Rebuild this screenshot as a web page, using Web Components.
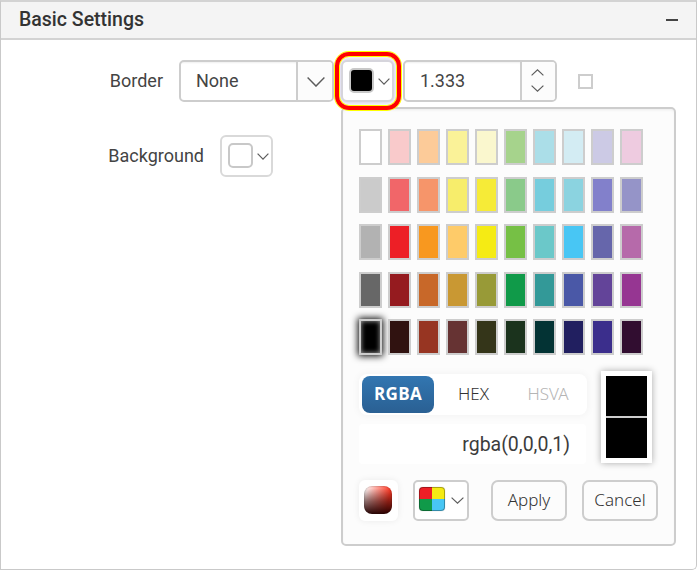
<!DOCTYPE html>
<html lang="en"><head><meta charset="utf-8"><title>Basic Settings</title>
<style>body{margin:0;background:#fff;font-family:Roboto,"Liberation Sans",sans-serif;font-size:18px;color:#444}</style></head>
<body><settings-panel></settings-panel>
<script>
const define=(name,html,setup)=>customElements.define(name,class extends HTMLElement{
  connectedCallback(){
    if(this.shadowRoot)return;
    const r=this.attachShadow({mode:'open'});
    r.innerHTML='<style>*{box-sizing:border-box}:host{box-sizing:border-box}</style>'+html;
    if(setup)setup(this,r);
  }
});

define('chevron-icon',`<style>:host{display:block;flex:none;line-height:0}</style>
<svg fill="none" stroke="#5c5c5c"><path/></svg>`,(h,r)=>{
  const w=+h.getAttribute('w'),t=+h.getAttribute('h'),s=r.querySelector('svg');
  s.setAttribute('width',w);s.setAttribute('height',t);
  s.setAttribute('stroke-width',h.getAttribute('stroke')||1.2);
  const up=h.hasAttribute('up');
  r.querySelector('path').setAttribute('d',up?`M.6 ${t-.6}L${w/2} .9L${w-.6} ${t-.6}`:`M.6 .6L${w/2} ${t-.9}L${w-.6} .6`);
});

define('combo-box',`<style>
:host{display:flex;width:155px;height:42px;border:2px solid #cdcdcd;border-radius:5px;background:#fff;overflow:hidden}
.v{width:115px;padding-left:15px;line-height:38px;box-shadow:inset 0 2px 2px -1px #0001}
.b{flex:1;border-left:2px solid #cdcdcd;background:#fcfcfc;display:flex;align-items:center;justify-content:center;padding:2px 0 0 1px}
</style><div class="v"><slot></slot></div><div class="b"><chevron-icon w="18" h="10" stroke="1.4"></chevron-icon></div>`);

define('number-spinner',`<style>
:host{display:flex;width:154px;height:42px;border:2px solid #cdcdcd;border-radius:5px;background:#fff;overflow:hidden}
.v{width:115px;padding-left:15px;line-height:38px;box-shadow:inset 0 2px 2px -1px #0001}
.b{flex:1;border-left:2px solid #cdcdcd;background:#fcfcfc;display:flex;flex-direction:column;align-items:center;padding:7px 2px 0 0;gap:9px}
</style><div class="v"><slot></slot></div><div class="b"><chevron-icon w="13" h="7" up></chevron-icon><chevron-icon w="13" h="7"></chevron-icon></div>`);

define('color-button',`<style>
:host{display:block;width:53px;height:42px;position:relative}
.btn{display:flex;align-items:flex-start;height:42px;gap:4px;padding:6px 0 0 6px;border:2px solid #d9d9d9;border-radius:6px;background:#fff}
i{flex:none;width:25px;height:25px;border:2px solid #c8c8c8;border-radius:5px;background:var(--c)}
chevron-icon{margin-top:10px}
:host([open]) .btn{box-shadow:0 0 5px 1px #cfcbe8;border-color:#d6d5dc}
.ring{display:none}
:host([open]) .ring{display:block;position:absolute;z-index:3;left:-6px;top:-8px;width:66px;height:58px;border:4px solid red;border-radius:14px;box-shadow:0 0 0 1px #ff0,inset 0 0 0 1px #ff0}
</style><div class="btn"><i></i><chevron-icon w="12" h="7"></chevron-icon></div><div class="ring"></div>`,(h)=>h.style.setProperty('--c',h.getAttribute('color')));

define('swatch-grid',`<style>
:host{display:grid;grid-template-columns:repeat(10,23px);grid-auto-rows:36px;gap:11.6px 6px}
i{border:2px solid #cdcdcd}
.sel{box-shadow:0 0 7px 1px #000,inset 0 0 5px #aaa}
</style>`,(h,r)=>{
  const colors=`fff f9cacb fccb99 faf298 faf7ce a6d38c abdee8 d3ecf3 cccae5 eecbe0
  cbcbcb f16669 f6956a f7ed6b f6eb37 8aca8a 76cddd 8bd3e0 8280cb 9594c8
  b2b2b2 ed1f26 f8981f fecb69 f5eb14 76c045 6bc8c9 48c6f4 6666ab b66aaa
  676767 951b1f c86829 c99833 989a37 109a49 339998 4a58a7 634499 963692
  000 301210 973522 663333 343519 1b331d 033334 211f60 3b2e8c 310d30`.split(/\s+/);
  for(const c of colors){const i=document.createElement('i');i.style.background='#'+c;if(c==='000')i.className='sel';r.append(i)}
});

define('mode-tabs',`<style>
:host{display:flex;width:228px;height:41px;padding:2px 3px;background:#fff;border-radius:8px;box-shadow:0 0 8px #0000000d;font:350 17px/36px "Noto Sans","Open Sans",sans-serif;text-align:center;color:#333}
span{height:37px}.a{width:72px;border-radius:8px;color:#fff;font:700 17px/36px "Open Sans",sans-serif;letter-spacing:.3px;background:linear-gradient(#3276b1,#2a6093)}
.b{width:79px}.c{width:70px;color:#b5b5b5}
</style><span class="a">RGBA</span><span class="b">HEX</span><span class="c">HSVA</span>`);

define('color-preview',`<style>
:host{display:block;width:51px;height:92px;padding:5px;background:#fff;box-shadow:0 0 7px #0005}
i{display:block;height:40px;background:#000}i+i{height:42px;border-top:2px solid #cdcdcd}
</style><i></i><i></i>`);

define('push-button',`<style>
:host{display:block;width:76px;height:41px;border:2px solid #cdcdcd;border-radius:7px;background:#fcfcfc;font:350 17px/36px "Noto Sans","Open Sans",sans-serif;text-align:center;color:#333;white-space:nowrap}
</style><slot></slot>`);

define('spectrum-button',`<style>
:host{display:block;width:39px;height:41px;padding:6px 5px;background:#fff;border-radius:6px;box-shadow:0 0 7px #00000012}
i{display:block;width:28px;height:28px;border-radius:8px;background:linear-gradient(#0000 8%,#2008 55%,#200e 97%),linear-gradient(100deg,#fff 3%,#ff3c28 82%);box-shadow:inset 0 0 2px #0006}
</style><i></i>`);

define('palette-button',`<style>
:host{display:flex;width:56px;height:41px;border:2px solid #cdcdcd;border-radius:5px;background:#fff;padding:5px 0 0 4px}
i{display:block;width:26px;height:24px;border-radius:4px;border:1px solid #0000004d;background:conic-gradient(#f5eb14 25%,#48c6f4 0 50%,#109a49 0 75%,#ed1f26 0) border-box;box-shadow:0 0 1px #0005}
chevron-icon{margin:10px 0 0 6px}
</style><i></i><chevron-icon w="13" h="7"></chevron-icon>`);

define('color-popup',`<style>
:host{display:block;width:335px;height:439px;border:2px solid #cdcdcd;border-radius:5px;background:#fcfcfc;padding:20px 16px;box-shadow:inset 0 2px 3px -1px #0001}
.mid{display:flex;gap:14px;margin-top:16px}.left{padding-top:3px}
.field{width:227px;height:40px;margin-top:9px;border-radius:4px;background:#fff;text-align:right;padding-right:16px;font-size:19.5px;line-height:41px;color:#3c3c3c}
.foot{display:flex;margin-top:16px;gap:15px}
push-button:first-of-type{margin-left:7px}
</style><swatch-grid></swatch-grid>
<div class="mid"><div class="left"><mode-tabs></mode-tabs><div class="field">rgba(0,0,0,1)</div></div><color-preview></color-preview></div>
<div class="foot"><spectrum-button></spectrum-button><palette-button></palette-button><push-button>Apply</push-button><push-button>Cancel</push-button></div>`);

define('panel-header',`<style>
:host{display:flex;align-items:center;justify-content:space-between;height:38px;padding:0 18px 2px 18px;background:#f4f4f4;border-bottom:2px solid #d3d3d3;font-size:19.5px;font-weight:500;color:#333}
i{width:12px;height:2px;background:#444;margin-top:1px}
</style><slot></slot><i></i>`);

define('settings-panel',`<style>
:host{display:block;width:697px;height:570px;border:1px solid #c9c9c9;border-top:2px solid #d3d3d3;border-radius:0 0 5px 0;position:relative;background:#fff}
.row{display:flex;align-items:center;height:42px}
.r1{margin-top:20px}.r2{margin-top:33px}
label{flex:none;text-align:right;padding-bottom:2px}
.r1 label{width:162px;margin-right:16px}.r2 label{width:203px;margin-right:16px}
.c1{margin-left:7px}.n{margin-left:9px}
.k{width:15px;height:15px;border:2px solid #cdcdcd;margin-left:21px}
color-popup{position:absolute;z-index:2;left:340px;top:105px}
color-button[open]{z-index:3}
</style><panel-header>Basic Settings</panel-header>
<div class="row r1"><label>Border</label><combo-box>None</combo-box><color-button class="c1" color="#000" open></color-button><number-spinner class="n">1.333</number-spinner><div class="k"></div></div>
<div class="row r2"><label>Background</label><color-button color="#fff"></color-button></div>
<color-popup></color-popup>`);
</script></body></html>
